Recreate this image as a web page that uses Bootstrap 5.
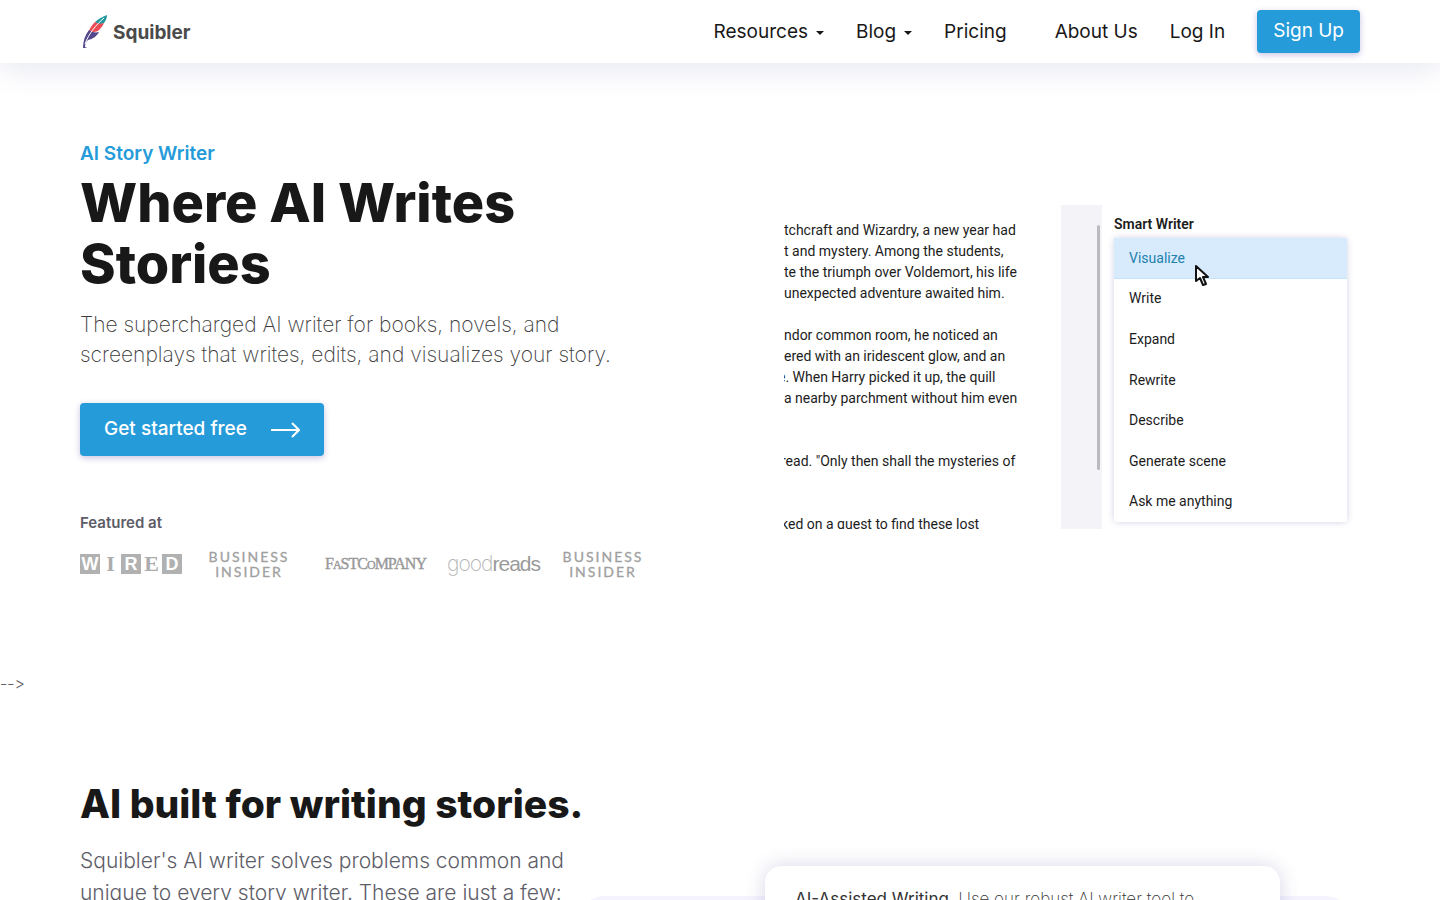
<!DOCTYPE html>
<html lang="en">
<head>
<meta charset="utf-8">
<meta name="viewport" content="width=device-width, initial-scale=1">
<title>Squibler – AI Story Writer</title>
<link href="https://cdn.jsdelivr.net/npm/bootstrap@5.3.0/dist/css/bootstrap.min.css" rel="stylesheet">
<style>
  :root { --sq-blue: #259bd9; --sq-ink: #181818; --sq-grey: #5d5d68; }
  body { font-family: Inter, "Liberation Sans", sans-serif; color: var(--sq-grey); overflow-x: hidden; }
  .gutter { padding-left: 80px; padding-right: 80px; }

  .site-nav { height: 63px; background: #fff; box-shadow: 0 8px 28px rgba(70, 80, 150, .12); }
  .brand-name { font-size: 19px; font-weight: 700; color: #4a4a4a; line-height: 24px; padding-top: 2px; }
  .menu-row { gap: 32px; font-size: 19px; line-height: 24px; }
  .menu-row .nav-link { color: var(--sq-ink); font-weight: 400; padding: 0; }
  .menu-row .dropdown-toggle::after { margin-left: 8px; border-top-width: 4px; border-left-width: 4px; border-right-width: 4px; vertical-align: 3px; }
  .btn-sq { --bs-btn-color: #fff; --bs-btn-bg: var(--sq-blue); --bs-btn-hover-color: #fff; --bs-btn-hover-bg: #1c89c2; --bs-btn-border-width: 0; --bs-btn-border-radius: 4px; font-weight: 500; box-shadow: 0 2px 6px rgba(70, 60, 160, .3); }
  .btn-nav { height: 43px; padding: 0 16px; font-size: 19px; font-weight: 400; }
  .btn-hero { height: 53px; padding: 0 24px; font-size: 19px; gap: 24px; }

  .hero { padding-top: 78px; }
  .hero-col { width: 45%; }
  .eyebrow { color: var(--sq-blue); font-size: 19px; font-weight: 600; line-height: 26px; }
  .hero-title { color: var(--sq-ink); font-size: 54px; font-weight: 800; line-height: 61px; margin: 5px 0 16px; }
  .hero-text { color: #3d3d3d; font-size: 21px; font-weight: 200; line-height: 30px; margin-bottom: 33px; white-space: nowrap; }
  .featured { font-size: 15px; font-weight: 600; line-height: 20px; margin: 57px 0 16px; }

  .press { color: #a0a0a0; height: 30px; width: 574px; }
  .press > * { flex: none; }
  .w-wired { width: 102px; } .w-bi { width: 134px; } .w-fast { width: 119px; } .w-good { width: 117px; } .w-last { width: 102px; }
  .wired { font: 700 22px/20px "Liberation Serif", serif; }
  .wired span { width: 20px; height: 20px; text-align: center; color: #acacac; }
  .wired .box { background: #b1b1b1; color: #fff; font-family: "Liberation Sans", sans-serif; font-size: 18px; }
  .insider { font: 400 14px/15px Lato, sans-serif; letter-spacing: 2px; -webkit-text-stroke: .3px #a0a0a0; }
  .fastco { font: 400 16px/20px "Liberation Serif", serif; letter-spacing: -1px; color: #999; -webkit-text-stroke: .4px #999; }
  .fastco small { font-size: 12px; }
  .goodreads { font: 400 21px/24px "Liberation Sans", sans-serif; letter-spacing: -1px; color: #9a9a9a; }
  .goodreads span { color: #b4b4b4; font-family: Inter, sans-serif; font-weight: 200; }

  .demo { margin-top: 64px; aspect-ratio: 16 / 9; overflow: hidden; font-family: Roboto, sans-serif; font-size: 14px; color: #1c1c1c; }
  .story { width: 277px; padding-top: 15px; line-height: 21px; white-space: nowrap; overflow: hidden; }
  .story p { margin: 0 0 21px; }
  .story .gap { margin-bottom: 42px; }
  .story .cut { display: block; margin-left: -3px; }
  .story .cut-more { display: block; margin-left: -6px; }
  .strip { width: 41px; background: #f3f3f8; padding: 20px 2px 0 0; }
  .thumb { width: 3px; height: 245px; background: #b9bbc1; border-radius: 2px; }
  .tools { width: 233px; margin-left: 12px; padding-top: 8px; }
  .tools h2 { font-size: 14px; font-weight: 600; line-height: 22px; margin: 0 0 3px; }
  .tool-list { height: 284px; background: #fff; box-shadow: 0 0 6px rgba(70, 80, 150, .25); border-radius: 3px; }
  .tool-list button { flex: 1; border: 0; background: none; text-align: left; padding: 0 15px; color: inherit; }
  .tool-list .on { background: #d8ebfd; color: #2382ad; box-shadow: inset 0 -1px #c5e2fa; }
  .pointer { left: 80px; top: 26px; }

  .stray { font-size: 16px; font-weight: 300; line-height: 24px; margin-top: 92px; font-feature-settings: "calt" 0; }
  .built { padding-top: 84px; padding-left: 80px; padding-right: 90px; }
  .built-copy { width: 500px; }
  .built-title { color: var(--sq-ink); font-size: 39px; font-weight: 800; line-height: 50px; margin-bottom: 16px; white-space: nowrap; }
  .built-copy p { font-size: 21px; line-height: 32px; font-weight: 300; white-space: nowrap; }
  .panel { background: #f5f4fe; border-radius: 24px; margin-top: 117px; padding: 0 70px 40px 185px; }
  .feature { background: #fff; border-radius: 16px; margin-top: -30px; padding: 20px 30px; box-shadow: 0 0 20px rgba(60, 50, 140, .2); font-size: 17px; line-height: 26px; font-weight: 200; color: #333; }
  .feature b { font-weight: 400; }
</style>
</head>
<body>
<header class="site-nav gutter d-flex align-items-center justify-content-between position-relative">
  <a href="#" class="d-flex align-items-center gap-1 text-decoration-none">
    <svg width="29" height="35" viewBox="0 0 29 35" aria-hidden="true">
      <path d="M27 1C22 3 18 5 15 8c2 2 6 3 9 1 2-3 3-5 3-8z" fill="#23989f"/>
      <path d="M15 8c-3 3-5 6-6 9 4 2 9 1 11-2 2-2 3-4 4-6-3 1-6 1-9-1z" fill="#ea4c55"/>
      <path d="M9 16C5 21 3 27 3 34h4l-2-1c0-3 1-5 3-7 5-1 9-4 11-8-4 1-7 0-10-2z" fill="#54478c"/>
      <path d="M24 4C16 11 9 19 5 30" fill="none" stroke="#fff" stroke-width="1"/>
    </svg>
    <span class="brand-name">Squibler</span>
  </a>
  <nav class="menu-row d-flex align-items-center">
    <a href="#" class="nav-link dropdown-toggle">Resources</a>
    <a href="#" class="nav-link dropdown-toggle">Blog</a>
    <a href="#" class="nav-link me-3">Pricing</a>
    <a href="#" class="nav-link">About Us</a>
    <a href="#" class="nav-link">Log In</a>
    <button type="button" class="btn btn-sq btn-nav">Sign Up</button>
  </nav>
</header>

<main>
  <section class="hero gutter d-flex justify-content-between align-items-start">
    <div class="hero-col">
      <div class="eyebrow">AI Story Writer</div>
      <h1 class="hero-title">Where AI Writes<br>Stories</h1>
      <p class="hero-text">The supercharged AI writer for books, novels, and<br>screenplays that writes, edits, and visualizes your story.</p>
      <button type="button" class="btn btn-sq btn-hero d-inline-flex align-items-center">Get started free
        <svg width="29" height="16" viewBox="0 0 29 16" fill="none" stroke="#fff" stroke-width="2" aria-hidden="true"><path d="M0 8h28M21 1l7 7-7 7"/></svg>
      </button>
      <div class="featured">Featured at</div>
      <div class="press d-flex align-items-center text-center">
        <div class="wired w-wired d-flex justify-content-between"><span class="box">W</span><span>I</span><span class="box">R</span><span>E</span><span class="box">D</span></div>
        <div class="insider w-bi">BUSINESS<br>INSIDER</div>
        <div class="fastco w-fast">F<small>A</small>STC<small>O</small>MPANY</div>
        <div class="goodreads w-good"><span>good</span>reads</div>
        <div class="insider w-last">BUSINESS<br>INSIDER</div>
      </div>
    </div>

    <div class="hero-col demo d-flex">
      <div class="story flex-shrink-0">
        <p>tchcraft and Wizardry, a new year had<br>t and mystery. Among the students,<br>te the triumph over Voldemort, his life<br>unexpected adventure awaited him.</p>
        <p class="gap">ndor common room, he noticed an<br>ered with an iridescent glow, and an<span class="cut-more">e. When Harry picked it up, the quill</span>a nearby parchment without him even</p>
        <p class="gap"><span class="cut">read. "Only then shall the mysteries of</span></p>
        <p><span class="cut">ked on a quest to find these lost</span></p>
      </div>
      <div class="strip flex-shrink-0 d-flex justify-content-end"><div class="thumb"></div></div>
      <div class="tools flex-shrink-0">
        <h2>Smart Writer</h2>
        <div class="tool-list d-flex flex-column position-relative">
          <button type="button" class="on">Visualize</button>
          <button type="button">Write</button>
          <button type="button">Expand</button>
          <button type="button">Rewrite</button>
          <button type="button">Describe</button>
          <button type="button">Generate scene</button>
          <button type="button">Ask me anything</button>
          <svg class="pointer position-absolute" width="16" height="23" viewBox="0 0 16 23" aria-hidden="true"><path d="M2 2v15l4-3 3 7 3-1-3-7h5z" fill="#fff" stroke="#111" stroke-width="2" stroke-linejoin="round"/></svg>
        </div>
      </div>
    </div>
  </section>

  <div class="stray">--&gt;</div>

  <section class="built d-flex align-items-start">
    <div class="built-copy flex-shrink-0">
      <h2 class="built-title">AI built for writing stories.</h2>
      <p>Squibler's AI writer solves problems common and<br>unique to every story writer. These are just a few:</p>
    </div>
    <div class="panel flex-grow-1">
      <div class="feature"><b>AI-Assisted Writing.</b> Use our robust AI writer tool to</div>
    </div>
  </section>
</main>
<script src="https://cdn.jsdelivr.net/npm/bootstrap@5.3.0/dist/js/bootstrap.bundle.min.js"></script>
</body>
</html>
